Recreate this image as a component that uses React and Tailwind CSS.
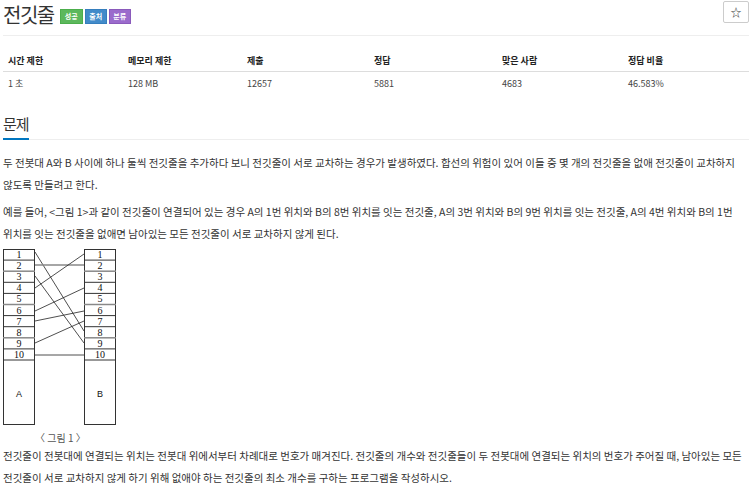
import React from 'react';

const stats = [
  { label: '시간 제한', value: '1 초' },
  { label: '메모리 제한', value: '128 MB' },
  { label: '제출', value: '12657' },
  { label: '정답', value: '5881' },
  { label: '맞은 사람', value: '4683' },
  { label: '정답 비율', value: '46.583%' },
];

const rowY = (i) => 249 + 11.1 * i;

const wires = [
  [35, 252, 84, 331],
  [35, 276, 84, 343],
  [35, 265, 84, 265],
  [35, 288, 84, 254],
  [35, 311, 84, 288],
  [35, 321, 84, 311],
  [35, 343, 84, 321],
  [35, 355, 84, 355],
];

const Pole = ({ x, label }) => (
  <g>
    <rect x={x + 0.5} y={249.5} width={31} height={175} fill="#fff" stroke="#333" />
    {Array.from({ length: 10 }, (_, i) => (
      <g key={i}>
        <line x1={x} x2={x + 32} y1={rowY(i + 1)} y2={rowY(i + 1)} stroke={i % 3 === 1 ? '#888' : '#333'} strokeWidth={i % 3 === 1 ? 1.5 : 1} />
        <text x={x + 16} y={rowY(i) + 9} textAnchor="middle" fontSize="10" fontFamily="'Liberation Serif', serif" fill="#111">
          {i + 1}
        </text>
      </g>
    ))}
    <text x={x + 16} y={397} textAnchor="middle" fontSize="9" fontFamily="'Liberation Sans', sans-serif" fill="#111">
      {label}
    </text>
  </g>
);

const Figure = () => (
  <div className="w-[120px]">
    <svg width="120" height="180" viewBox="0 247 120 180" className="block">
      {wires.map(([x1, y1, x2, y2], i) => (
        <line key={i} x1={x1} y1={y1} x2={x2} y2={y2} stroke={i === 2 ? '#888' : '#222'} strokeWidth={i === 2 ? 1.5 : 0.8} />
      ))}
      <Pole x={3} label="A" />
      <Pole x={84} label="B" />
    </svg>
    <div className="pl-[35px] text-[10px] leading-[14px] text-[#555] mt-[4px]">〈 그림 1 〉</div>
  </div>
);

export default function App() {
  return (
    <div className="w-[750px] h-[492px] overflow-hidden bg-white pl-[3px] pr-[1px] text-[#333] font-['Noto_Sans_CJK_KR',sans-serif]">
      {/* Header */}
      <div className="flex justify-between items-start h-[36px] border-b border-[#eee]">
        <div className="flex items-center gap-[2px] pt-[1px]">
          <h1 className="text-[20px] leading-[28px] tracking-[-1.5px] text-[#333] mr-[4px]">전깃줄</h1>
          <span className="w-[23px] h-[15px] mt-[2px] flex items-center justify-center bg-[#5cb85c] border border-[#4cae4c] text-white text-[7px] font-bold">성공</span>
          <span className="w-[22px] h-[15px] mt-[2px] flex items-center justify-center bg-[#428bca] border border-[#357ebd] text-white text-[7px] font-bold">출처</span>
          <span className="w-[22px] h-[15px] mt-[2px] flex items-center justify-center bg-[#9b6bcc] border border-[#8a5abb] text-white text-[7px] font-bold">분류</span>
        </div>
        <button className="w-[26px] h-[22px] mt-[1px] border border-[#ccc] rounded-[2px] flex items-center justify-center text-[11px] text-[#333]">☆</button>
      </div>

      {/* Stats table */}
      <div className="mt-[14px] grid grid-cols-[120px_119px_127px_128px_126px_1fr] text-[9px]">
        {stats.map((s) => (
          <div key={s.label} className="h-[22px] flex items-center px-[5px] font-bold text-[#222] border-b border-[#ddd]">
            {s.label}
          </div>
        ))}
        {stats.map((s) => (
          <div key={s.label} className="h-[23px] flex items-center px-[5px] text-[#444]">
            {s.value}
          </div>
        ))}
      </div>

      {/* Problem */}
      <div className="mt-[16px] border-b border-[#eee] flex">
        <h2 className="text-[15px] leading-[24px] pt-[1px] tracking-[-1px] whitespace-nowrap text-[#333] border-b-2 border-[#0076c0] pb-[2px] -mb-[1px]">문제</h2>
      </div>

      <div className="text-[10.5px] leading-[22px] text-[#333] mt-[12px] whitespace-nowrap">
        <p>
          두 전봇대 A와 B 사이에 하나 둘씩 전깃줄을 추가하다 보니 전깃줄이 서로 교차하는 경우가 발생하였다. 합선의 위험이 있어 이들 중 몇 개의 전깃줄을 없애 전깃줄이 교차하지
          <br />
          않도록 만들려고 한다.
        </p>
        <p className="mt-[5px]">
          예를 들어, &lt;그림 1&gt;과 같이 전깃줄이 연결되어 있는 경우 A의 1번 위치와 B의 8번 위치를 잇는 전깃줄, A의 3번 위치와 B의 9번 위치를 잇는 전깃줄, A의 4번 위치와 B의 1번
          <br />
          위치를 잇는 전깃줄을 없애면 남아있는 모든 전깃줄이 서로 교차하지 않게 된다.
        </p>
        <div className="-ml-[3px] mt-[2px]">
          <Figure />
        </div>
        <p>
          전깃줄이 전봇대에 연결되는 위치는 전봇대 위에서부터 차례대로 번호가 매겨진다. 전깃줄의 개수와 전깃줄들이 두 전봇대에 연결되는 위치의 번호가 주어질 때, 남아있는 모든
          <br />
          전깃줄이 서로 교차하지 않게 하기 위해 없애야 하는 전깃줄의 최소 개수를 구하는 프로그램을 작성하시오.
        </p>
      </div>
    </div>
  );
}
